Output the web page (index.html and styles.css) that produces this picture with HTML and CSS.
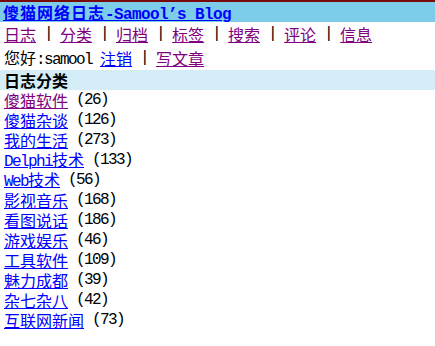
FILE: index.html
```html
<!DOCTYPE html>
<html lang="zh-CN">
<head>
<meta charset="utf-8">
<title>傻猫网络日志-Samool's Blog</title>
<link rel="stylesheet" href="styles.css">
</head>
<body>
<header class="titlebar">
  <a class="title" href="#">傻猫网络日志<span class="en-b">-Samool’s Blog</span></a>
</header>
<nav class="nav">
  <a class="visited" href="#">日志</a><span class="sep">|</span>
  <a class="visited" href="#">分类</a><span class="sep">|</span>
  <a class="visited" href="#">归档</a><span class="sep">|</span>
  <a class="visited" href="#">标签</a><span class="sep">|</span>
  <a class="visited" href="#">搜索</a><span class="sep">|</span>
  <a class="visited" href="#">评论</a><span class="sep">|</span>
  <a class="visited" href="#">信息</a>
</nav>
<div class="user">
  <span>您好<span class="en">:samool</span></span>
  <a class="link" href="#">注销</a><span class="sep">|</span>
  <a class="visited" href="#">写文章</a>
</div>
<h2 class="cat-title">日志分类</h2>
<ul class="cats">
  <li><a class="visited" href="#">傻猫软件</a><span class="en count">(26)</span></li>
  <li><a class="link" href="#">傻猫杂谈</a><span class="en count">(126)</span></li>
  <li><a class="link" href="#">我的生活</a><span class="en count">(273)</span></li>
  <li><a class="link" href="#"><span class="en">Delphi</span>技术</a><span class="en count">(133)</span></li>
  <li><a class="link" href="#"><span class="en">Web</span>技术</a><span class="en count">(56)</span></li>
  <li><a class="link" href="#">影视音乐</a><span class="en count">(168)</span></li>
  <li><a class="link" href="#">看图说话</a><span class="en count">(186)</span></li>
  <li><a class="link" href="#">游戏娱乐</a><span class="en count">(46)</span></li>
  <li><a class="link" href="#">工具软件</a><span class="en count">(109)</span></li>
  <li><a class="link" href="#">魅力成都</a><span class="en count">(39)</span></li>
  <li><a class="link" href="#">杂七杂八</a><span class="en count">(42)</span></li>
  <li><a class="link" href="#">互联网新闻</a><span class="en count">(73)</span></li>
</ul>
</body>
</html>
```
FILE: styles.css
```css
html, body {
  margin: 0;
  padding: 0;
  background: #ffffff;
}
body {
  font-family: "Noto Sans CJK SC", sans-serif;
  font-size: 16px;
  color: #000000;
  border-top: 2px solid #7a0a0a;
}
a {
  text-decoration: underline;
  text-underline-offset: 1px;
}
.link { color: #0000ff; }
.visited { color: #800080; }

.en {
  font-family: "Liberation Mono", monospace;
  letter-spacing: -1.6px;
}
.en-b {
  font-family: "Liberation Mono", monospace;
  letter-spacing: -0.6px;
}

.titlebar {
  background: #7dcdea;
  height: 20px;
  line-height: 20px;
  padding-left: 3px;
}
.title {
  color: #0000ff;
  font-weight: bold;
  letter-spacing: 1px;
}

.nav, .user {
  display: flex;
  align-items: center;
  height: 24px;
  line-height: 20px;
  padding-left: 4px;
}
.sep {
  display: inline-block;
  width: 8px;
  margin: 0 8px;
  text-align: center;
  font-family: "Liberation Mono", monospace;
}
.user .link { margin-left: 8px; }

.cat-title {
  margin: 0;
  background: #d4edf6;
  height: 20px;
  line-height: 20px;
  font-size: 16px;
  font-weight: bold;
  padding-left: 4px;
}

.cats {
  list-style: none;
  margin: 0;
  padding: 0 0 0 4px;
}
.cats li {
  height: 20px;
  line-height: 20px;
  display: flex;
  align-items: center;
}
.count {
  margin-left: 8px;
}
```
